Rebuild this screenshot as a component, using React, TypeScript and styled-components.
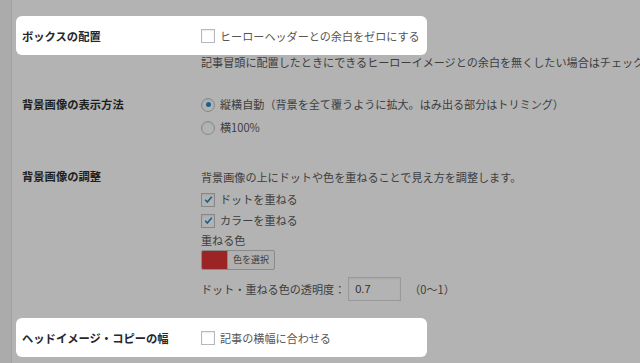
import React from 'react';
import styled, { createGlobalStyle, css } from 'styled-components';

// 暗くしたオーバーレイ越しの色と、ハイライト部分の色
const colors = {
  page: '#b3b3b3',
  rail: '#ababab',
  railLine: '#a2a2a2',
  label: '#1c1f22',
  labelLit: '#23282d',
  text: '#3d3d3d',
  textLit: '#555555',
  boxBorder: '#85888b',
  boxBorderLit: '#b4b9be',
  check: '#16628a',
  swatch: '#9b2424',
};

const GlobalStyle = createGlobalStyle`
  html, body {
    margin: 0;
    padding: 0;
    background: ${colors.page};
  }
  body {
    font-family: "Noto Sans CJK JP", "Noto Sans", sans-serif;
    -webkit-font-smoothing: antialiased;
  }
`;

const Screen = styled.div`
  display: flex;
  width: 640px;
  height: 363px;
  overflow: hidden;
  background: ${colors.page};
`;

const AdminRail = styled.div`
  width: 11px;
  flex-shrink: 0;
  background: ${colors.rail};
  border-right: 1px solid ${colors.railLine};
`;

const Content = styled.div`
  flex: 1;
  min-width: 0;
  display: flex;
  flex-direction: column;
  padding: 16px 0 0 4px;
  border-top: 1px solid #a4a4a4;
  margin-top: -1px;
  white-space: nowrap;
  overflow: hidden;
`;

const Row = styled.div<{ $lit?: boolean }>`
  display: grid;
  grid-template-columns: 179px 1fr;
  padding: 0 6px;
  ${p =>
    p.$lit &&
    css`
      width: 399px;
      height: 39px;
      align-items: center;
      background: #ffffff;
      border-radius: 6px;
    `}
`;

const Label = styled.div<{ $lit?: boolean }>`
  font-size: 11.3px;
  font-weight: 700;
  line-height: 22px;
  color: ${p => (p.$lit ? colors.labelLit : colors.label)};
`;

const Field = styled.div`
  display: flex;
  flex-direction: column;
  min-width: 0;
`;

const Text = styled.div<{ $lit?: boolean; $h?: number }>`
  font-size: 11.1px;
  line-height: ${p => p.$h ?? 22}px;
  height: ${p => p.$h ?? 22}px;
  color: ${p => (p.$lit ? colors.textLit : colors.text)};
  display: flex;
  align-items: center;
  gap: 5px;
`;

const Description = styled(Text)`
  padding-left: 185px;
  margin-bottom: 24px;
  overflow: hidden;
`;

const Box = styled.span<{ $lit?: boolean }>`
  width: 12px;
  height: 12px;
  flex-shrink: 0;
  border: 1px solid ${p => (p.$lit ? colors.boxBorderLit : colors.boxBorder)};
  background: ${p => (p.$lit ? '#ffffff' : colors.page)};
  box-shadow: inset 0 1px 2px rgba(0, 0, 0, 0.08);
  display: inline-flex;
  align-items: center;
  justify-content: center;
`;

const Radio = styled(Box)`
  border-radius: 50%;
`;

const RadioDot = styled.span`
  width: 5px;
  height: 5px;
  border-radius: 50%;
  background: ${colors.check};
`;

const Section = styled.div<{ $gap?: number }>`
  margin-bottom: ${p => p.$gap ?? 0}px;
`;

const ColorButton = styled.div`
  display: flex;
  width: 72px;
  height: 18px;
  border: 1px solid #8a8a8a;
  border-radius: 2px;
  overflow: hidden;
  background: #b0b0b0;
  margin: 0 0 7px;
`;

const Swatch = styled.span`
  width: 25px;
  background: ${colors.swatch};
  border-right: 1px solid #8a8a8a;
`;

const ColorButtonText = styled.span`
  flex: 1;
  font-size: 9px;
  line-height: 18px;
  text-align: center;
  color: #3d3d3d;
`;

const OpacityRow = styled(Text)`
  height: 24px;
  gap: 0;
  margin-bottom: 17px;
`;

const NumberInput = styled.div`
  width: 45px;
  height: 22px;
  margin: 0 8px 0 3px;
  padding-left: 6px;
  border: 1px solid #999999;
  background: ${colors.page};
  box-shadow: inset 0 1px 2px rgba(0, 0, 0, 0.06);
  font-family: "Liberation Sans", Arial, sans-serif;
  font-size: 11px;
  line-height: 22px;
  color: #2e2e2e;
`;

const Check = ({ checked, lit }: { checked?: boolean; lit?: boolean }) => (
  <Box $lit={lit}>
    {checked && (
      <svg width="11" height="11" viewBox="0 0 20 20">
        <path d="M4 10.5l3.8 4L16 5" fill="none" stroke={colors.check} strokeWidth="3" />
      </svg>
    )}
  </Box>
);

const RadioButton = ({ checked }: { checked?: boolean }) => (
  <Radio>{checked && <RadioDot />}</Radio>
);

export default function App() {
  return (
    <>
      <GlobalStyle />
      <Screen>
        <AdminRail />
        <Content>
          <Row $lit>
            <Label $lit>ボックスの配置</Label>
            <Text $lit>
              <Check lit />
              ヒーローヘッダーとの余白をゼロにする
            </Text>
          </Row>
          <Description $h={14}>
            記事冒頭に配置したときにできるヒーローイメージとの余白を無くしたい場合はチェックを入れてください。
          </Description>

          <Section $gap={26}>
            <Row>
              <Label>背景画像の表示方法</Label>
              <Field>
                <Text $h={23}>
                  <RadioButton checked />
                  縦横自動（背景を全て覆うように拡大。はみ出る部分はトリミング）
                </Text>
                <Text $h={23}>
                  <RadioButton />
                  横100%
                </Text>
              </Field>
            </Row>
          </Section>

          <Section>
            <Row>
              <Label>背景画像の調整</Label>
              <Field>
                <Text $h={24}>背景画像の上にドットや色を重ねることで見え方を調整します。</Text>
                <Text $h={21}>
                  <Check checked />
                  ドットを重ねる
                </Text>
                <Text $h={21}>
                  <Check checked />
                  カラーを重ねる
                </Text>
                <Text $h={19}>重ねる色</Text>
                <ColorButton>
                  <Swatch />
                  <ColorButtonText>色を選択</ColorButtonText>
                </ColorButton>
                <OpacityRow>
                  ドット・重ねる色の透明度：
                  <NumberInput>0.7</NumberInput>
                  （0～1）
                </OpacityRow>
              </Field>
            </Row>
          </Section>

          <Row $lit>
            <Label $lit>ヘッドイメージ・コピーの幅</Label>
            <Text $lit>
              <Check lit />
              記事の横幅に合わせる
            </Text>
          </Row>
        </Content>
      </Screen>
    </>
  );
}
